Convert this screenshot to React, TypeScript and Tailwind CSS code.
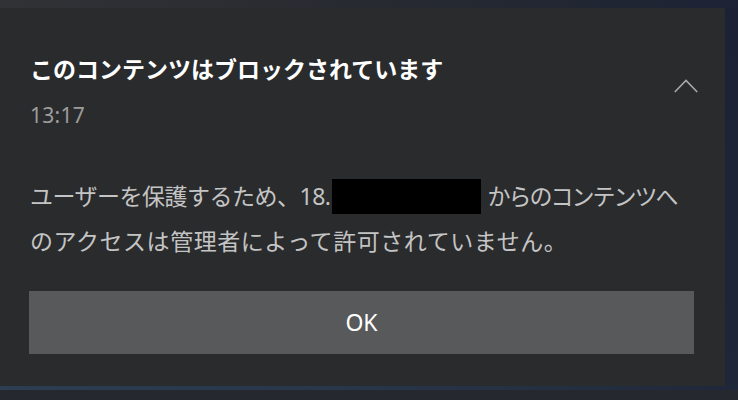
export default function App() {
  const font = {
    fontFamily: '"Noto Sans", "Noto Sans CJK JP", sans-serif',
  };

  return (
    <div
      className="w-[738px] h-[400px] overflow-hidden bg-[#1b2130] flex flex-col"
      style={font}
    >
      {/* desktop strip above the toast */}
      <div className="h-[8px] shrink-0 bg-gradient-to-r from-[#303236] via-[#272a30] to-[#1d2335]" />

      <div className="flex shrink-0">
        <div className="w-[725px] h-[378px] bg-[#2a2b2d] pl-[30px] pr-[27px] pt-[46px] flex flex-col">
          <div className="flex justify-between items-start">
            <div className="flex flex-col">
              <div className="text-[23px] leading-[30px] font-semibold text-white">
                このコンテンツはブロックされています
              </div>
              <div className="mt-[19px] text-[21px] leading-[24px] text-[#9d9d9d] tracking-[0.3px]">
                13:17
              </div>
            </div>
            <svg
              width="24"
              height="15"
              viewBox="0 0 24 15"
              className="mt-[24px]"
              fill="none"
            >
              <polyline
                points="0.8,14 12,2.5 23.2,14"
                stroke="#a9a9a9"
                strokeWidth="1.6"
              />
            </svg>
          </div>

          <div className="mt-[47px] text-[23px] leading-[45px] text-[#c4c4c4]">
            <span className="tracking-[-0.5px]">ユーザーを保護するため、18.</span>
            <span className="inline-block align-middle w-[149px] h-[35px] bg-black ml-[1px] mr-[7px] -mt-[4px]" />
            <span className="tracking-[-2px]">からのコンテンツへ</span>
            <br />
            <span className="tracking-[0.55px]">のアクセスは管理者によって許可されていません。</span>
          </div>

          <button className="mt-[27px] w-[665px] h-[63px] -ml-[1px] bg-[#58595b] text-white text-[23px] flex items-center justify-center">
            OK
          </button>
        </div>
        <div className="flex-1 bg-gradient-to-b from-[#1c2233] to-[#1e2638]" />
      </div>

      <div className="h-[4px] shrink-0 bg-gradient-to-r from-[#2b3e52] via-[#283649] to-[#1f283a]" />
      <div className="flex-1 bg-[#25292f]" />
    </div>
  );
}
